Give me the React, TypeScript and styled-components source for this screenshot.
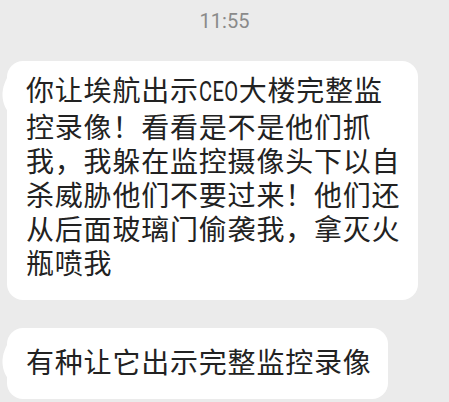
import React from "react";
import styled, { createGlobalStyle } from "styled-components";

const Global = createGlobalStyle`
  html, body {
    margin: 0;
    padding: 0;
    background: #ebebeb;
  }
  body {
    font-family: "Noto Sans CJK SC", "Noto Sans", sans-serif;
  }
`;

const Screen = styled.div`
  width: 449px;
  height: 402px;
  overflow: hidden;
  background: #ebebeb;
  display: flex;
  flex-direction: column;
  align-items: flex-start;
  padding: 0 0 0 7px;
  box-sizing: border-box;
`;

const Time = styled.div`
  align-self: stretch;
  margin-left: -7px;
  padding-top: 8px;
  height: 61px;
  box-sizing: border-box;
  text-align: center;
  font-family: Roboto, "Noto Sans", sans-serif;
  font-size: 20px;
  line-height: 26px;
  color: #8a8a8a;
`;

const Bubble = styled.div<{ $width: number; $top: number; $bottom: number }>`
  position: relative;
  background: #ffffff;
  border-radius: 16px;
  box-sizing: border-box;
  width: ${(p) => p.$width}px;
  padding: ${(p) => p.$top}px 6px ${(p) => p.$bottom}px 19px;
  font-size: 28px;
  line-height: 34px;
  letter-spacing: 0.8px;
  color: #222222;
`;

const Gap = styled.div`
  height: 28px;
`;

const Line = styled.div`
  white-space: nowrap;
`;

const Narrow = styled.span`
  display: inline-block;
  transform: scaleX(0.72);
  transform-origin: left center;
  margin-right: -15px;
  font-family: Roboto, "Noto Sans", sans-serif;
  letter-spacing: 0.5px;
`;

const TailSvg = styled.svg`
  position: absolute;
  left: -6px;
  top: 10px;
  width: 10px;
  height: 44px;
`;

function Tail() {
  return (
    <TailSvg viewBox="0 0 10 44">
      <path d="M10 0 C5 8 1 16 1.5 25 C2 33 5 39 10 44 Z" fill="#ffffff" />
    </TailSvg>
  );
}

export default function App() {
  return (
    <>
      <Global />
      <Screen>
        <Time>11:55</Time>
        <Bubble $width={411} $top={11} $bottom={21}>
          <Tail />
          <Line>
            你让埃航出示<Narrow>CEO</Narrow>大楼完整监
          </Line>
          <Line>控录像！看看是不是他们抓</Line>
          <Line>我，我躲在监控摄像头下以自</Line>
          <Line>杀威胁他们不要过来！他们还</Line>
          <Line>从后面玻璃门偷袭我，拿灭火</Line>
          <Line>瓶喷我</Line>
        </Bubble>
        <Gap />
        <Bubble $width={381} $top={16} $bottom={21}>
          <Tail />
          <Line>有种让它出示完整监控录像</Line>
        </Bubble>
      </Screen>
    </>
  );
}
